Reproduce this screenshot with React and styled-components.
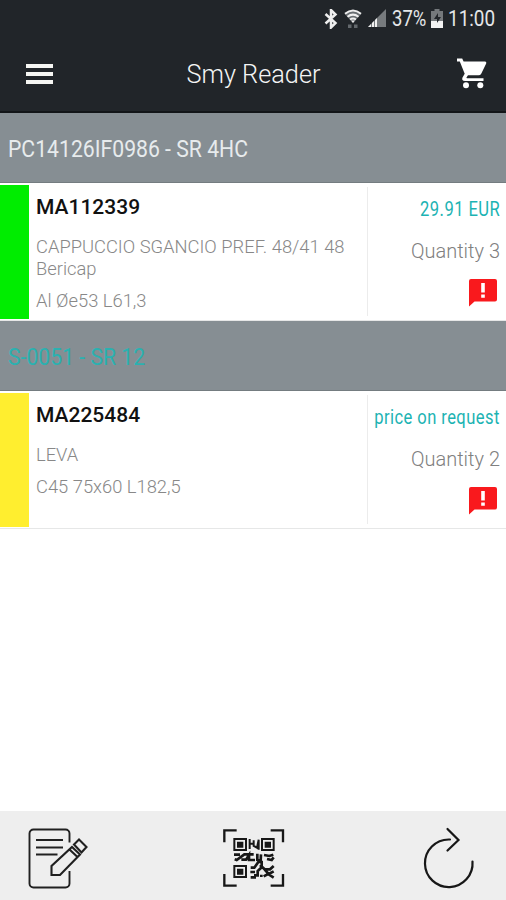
import React from 'react'
import styled, { createGlobalStyle } from 'styled-components'

const GlobalStyle = createGlobalStyle`
    *{
        box-sizing:border-box;
    }
    body{
        margin:0;
        background:#fff;
        font-family:Roboto, "Liberation Sans", sans-serif;
    }
    svg{
        display:block;
        flex-shrink:0;
    }
`

const Screen = styled.div`
    width:100%;
    height:100vh;
    display:flex;
    flex-direction:column;
    overflow:hidden;
`

const Header = styled.header`
    height:113px;
    flex-shrink:0;
    background:#212529;
    border-bottom:2px solid #121518;
    color:#fff;
`

const StatusBar = styled.div`
    height:37px;
    display:flex;
    align-items:center;
    justify-content:flex-end;
    padding-right:11px;
`

const StatusIcons = styled.div`
    display:flex;
    align-items:center;
    gap:6px;
`

const StatusTxt = styled.span`
    width:${props => props.$width}px;
    margin-left:${props => props.$gap}px;
    font-size:21.5px;
    line-height:36px;
    color:#e4e6e8;
    white-space:nowrap;
`

const BatterySlot = styled.div`
    margin-left:4px;
`

const Condensed = styled.span`
    display:inline-block;
    white-space:nowrap;
    transform:scaleX(${props => props.$scale});
    transform-origin:${props => props.$from || 'left'} center;
`

const Toolbar = styled.div`
    height:74px;
    display:grid;
    grid-template-columns:60px 1fr 60px;
    align-items:center;
`

const Title = styled.h1`
    margin:0;
    padding:1px 0 0 1px;
    text-align:center;
    font-size:25.3px;
    line-height:30px;
    font-weight:300;
    color:#f4f5f5;
`

const MenuButton = styled.div`
    width:27px;
    margin-left:26px;
    display:flex;
    flex-direction:column;
    gap:4px;
`

const MenuBar = styled.div`
    height:4px;
    background:#f6f6f3;
`

const CartButton = styled.div`
    margin-left:11px;
`

const GroupTitle = styled.h2`
    height:70px;
    margin:0;
    padding:3px 8px 0;
    display:flex;
    align-items:center;
    flex-shrink:0;
    background:#868e93;
    border-bottom:1px solid #747c80;
    font-size:23.5px;
    font-weight:400;
    color:${props => (props.$active ? '#2bb1b0' : '#e7ebed')};
`

const Row = styled.div`
    height:138px;
    padding:2px 0 1px;
    flex-shrink:0;
    display:flex;
    border-bottom:1px solid #e6e7e7;
`

const Status = styled.div`
    width:28.5px;
    background:${props => props.color};
`

const Info = styled.div`
    flex:1;
    padding:9px 0 0 7.5px;
    font-weight:300;
    font-size:18.35px;
    line-height:22px;
    color:#888;
`

const Code = styled.div`
    font-size:21px;
    line-height:27px;
    font-weight:500;
    color:#111;
`

const Line = styled.div`
    margin-top:${props => props.$top}px;
`

const Side = styled.div`
    width:139px;
    margin:2px 0 3px;
    padding:11px 6px 0 0;
    display:flex;
    flex-direction:column;
    align-items:flex-end;
    border-left:1px solid #ececec;
`

const Price = styled.div`
    font-size:19.5px;
    line-height:24px;
    letter-spacing:0.5px;
    color:#1cb3b3;
`

const Quantity = styled.div`
    margin:17px 0 16px;
    font-size:20px;
    line-height:24px;
    font-weight:300;
    color:#808080;
`

const AlertSlot = styled.div`
    margin-right:3px;
`

const Footer = styled.footer`
    height:89px;
    margin-top:auto;
    display:grid;
    grid-template-columns:199px 1fr 83px;
    align-items:center;
    padding:4px 0 0 24px;
    background:#eee;
`

const groups = [
  {
    title: 'PC14126IF0986 - SR 4HC',
    code: 'MA112339',
    color: '#00ed00',
    lines: ['CAPPUCCIO SGANCIO PREF. 48/41 48', 'Bericap'],
    size: 'Al Øe53 L61,3',
    price: '29.91 EUR',
    quantity: 3,
  },
  {
    title: 'S-0051 - SR 12',
    active: true,
    code: 'MA225484',
    color: '#ffee2f',
    lines: ['LEVA'],
    size: 'C45 75x60 L182,5',
    price: 'price on request',
    quantity: 2,
  },
]

const BluetoothIcon = () => (
  <svg width="14" height="20" viewBox="0 0 14 20">
    <path d="M1.500 5l10 9-4.500 4.500V1L11.500 5.500l-10 9" fill="none" stroke="#eee" strokeWidth="2.500" />
  </svg>
)

const WifiIcon = () => (
  <svg width="18" height="20" viewBox="0 0 18 20">
    <path d="M1 5.300Q9-1.200 17 5.300L9 14z" fill="#686d71" />
    <path d="M1 4.800Q9-1.700 17 4.800M3.500 7.800Q9 3.400 14.500 7.800M6 10.500Q9 8.500 12 10.500" fill="none" stroke="#efefef" strokeWidth="2" />
    <path d="M7 11.500h4L9 14z" fill="#eee" />
    <path d="M4 15.500h3.500v3.500H4zM10 15.500h3.500v3.500H10z" fill="#63686c" />
  </svg>
)

const SignalIcon = () => (
  <svg width="18" height="19" viewBox="0 0 18 19">
    <path d="M0 18L18 0v18z" fill="#777b7e" />
    <path d="M0 18l3-3v3zM4 18v-4l2-2v6zM7 18v-7l2-2v9z" fill="#f1f1f1" />
  </svg>
)

const BatteryIcon = () => (
  <svg width="12" height="19" viewBox="0 0 12 19">
    <path d="M3.500 0h5v2H12v17H0V2h3.500z" fill="#75797c" />
    <path d="M0 12h12v7H0z" fill="#f2f2f2" />
    <path d="M7 4L3 10h3v4l4-6H7z" fill="#212529" />
  </svg>
)

const CartIcon = () => (
  <svg width="31" height="32" viewBox="0 0 31 32" fill="#fff">
    <path d="M0 .5h5.200L6.600 3.500H28q1.800.2 1.200 2l-5 10.200q-.8 1.600-2.700 1.600H11l-1.500 2.200q-.3.800.6.800H26.500v2.800H8q-3.800-.1-2.500-3.500l2.200-3.900L2.800 3.500H0z" />
    <circle cx="9" cy="27.200" r="3" />
    <circle cx="23.300" cy="27.200" r="3" />
  </svg>
)

const AlertIcon = () => (
  <svg width="28" height="28" viewBox="0 0 28 28">
    <path d="M2 0h24A2 2 0 0 1 28 2v18.500a2 2 0 0 1-2 2H5.500L0 27.500V2A2 2 0 0 1 2 0z" fill="#f9191d" />
    <path d="M12.200 4h3.600v9.500h-3.600zM12.200 15.500h3.600v3.200h-3.600z" fill="#fff" />
  </svg>
)

const NoteIcon = () => (
  <svg width="68" height="66" viewBox="0 0 68 66" fill="none" stroke="#202020" strokeWidth="1.900">
    <path d="M45.500 17.500V8.500a4 4 0 0 0-4-4h-32a4 4 0 0 0-4 4v50a4 4 0 0 0 4 4h32a4 4 0 0 0 4-4V46" />
    <path d="M12 15h27M12 22.500h27M12 29.500h21.500" strokeWidth="2.200" />
    <path d="M27.500 50v-9L48 22l8 7.500L36 50zM50 19.500l5-5 7.500 7.500-5 5.500zM45.500 24.500l8 7.500" strokeWidth="2.100" />
  </svg>
)

// finder squares first, then the loose modules between them
const QrIcon = () => (
  <svg width="62" height="60" viewBox="39 39 186 180" fill="none" stroke="#171717">
    <path d="M43 82V46h37M182 46h37v36M43 177v35h37M182 212h37v-35" strokeWidth="7" />
    <path d="M73 72h35v33H73zM156 72h35v33h-35zM73 153h35v33H73z" strokeWidth="6" />
    <path d="M81 80h19v18H81zM164 80h19v18h-19zM81 161h19v18H81z" fill="#171717" stroke="none" />
    <path d="M119 72v30M131 76v17l10 5 5-24v30M122 86h8" strokeWidth="6" />
    <path d="M72 119h18M74 133l6 2 23-17h28M94 134h14l9-14v15h18M142 116v19l10 2 1-19M162 120l16 3 12-4M171 132l14 3 6-8" strokeWidth="8" />
    <path d="M122 158h11l12-17h10v16l-12 11v13h-11M121 171h14M122 187h16M150 150l14 13h16l11-10M164 164l12 13 15-8M161 184l13-7 17 11M154 186v-7" strokeWidth="8" />
  </svg>
)

const ReloadIcon = () => (
  <svg width="54" height="64" viewBox="0 0 54 64" fill="none" stroke="#171717" strokeWidth="2.200" strokeLinecap="round">
    <path d="M49.500 35.500A23.800 23.800 0 1 1 26 13.500h1" />
    <path d="M24.500 3L35.500 14 24.500 24.500" />
  </svg>
)

const Group = ({ data }) => (
  <>
    <GroupTitle $active={data.active}>
      <Condensed $scale={0.902}>{data.title}</Condensed>
    </GroupTitle>
    <Row>
      <Status color={data.color} />
      <Info>
        <Code>{data.code}</Code>
        <Line $top={15}>
          {data.lines.map(line => <div key={line}>{line}</div>)}
        </Line>
        <Line $top={10}>{data.size}</Line>
      </Info>
      <Side>
        <Price>
          <Condensed $scale={0.85} $from="right">{data.price}</Condensed>
        </Price>
        <Quantity>Quantity {data.quantity}</Quantity>
        <AlertSlot>
          <AlertIcon />
        </AlertSlot>
      </Side>
    </Row>
  </>
)

export default () => (
  <Screen>
    <GlobalStyle />
    <Header>
      <StatusBar>
        <StatusIcons>
          <BluetoothIcon />
          <WifiIcon />
          <SignalIcon />
        </StatusIcons>
        <StatusTxt $width={35} $gap={6}><Condensed $scale={0.86}>37%</Condensed></StatusTxt>
        <BatterySlot>
          <BatteryIcon />
        </BatterySlot>
        <StatusTxt $width={47} $gap={5}><Condensed $scale={0.88}>11:00</Condensed></StatusTxt>
      </StatusBar>
      <Toolbar>
        <MenuButton>
          <MenuBar />
          <MenuBar />
          <MenuBar />
        </MenuButton>
        <Title>Smy Reader</Title>
        <CartButton>
          <CartIcon />
        </CartButton>
      </Toolbar>
    </Header>
    {groups.map(group => <Group key={group.title} data={group} />)}
    <Footer>
      <NoteIcon />
      <QrIcon />
      <ReloadIcon />
    </Footer>
  </Screen>
)
